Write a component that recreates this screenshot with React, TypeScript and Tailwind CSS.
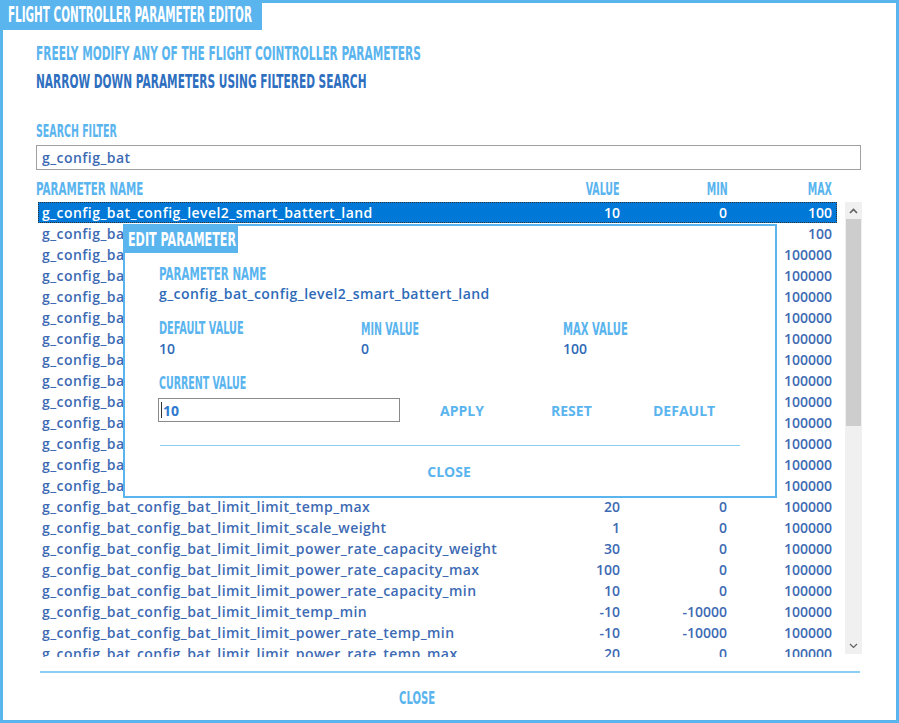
import React from "react";

function Cond({
  children,
  className = "",
  origin = "origin-left",
  scale = "scale-x-[0.62]",
}: {
  children: React.ReactNode;
  className?: string;
  origin?: string;
  scale?: string;
}) {
  return (
    <span
      className={`inline-block whitespace-nowrap font-bold ${scale} ${origin} ${className}`}
      style={{ fontFamily: '"DejaVu Sans Condensed", "DejaVu Sans", sans-serif' }}
    >
      {children}
    </span>
  );
}

type Row = { name: string; value: string; min: string; max: string };

const rows: Row[] = [
  { name: "g_config_bat_config_level2_smart_battert_land", value: "10", min: "0", max: "100" },
  { name: "g_config_bat_config_level1_smart_battert_go_home", value: "15", min: "0", max: "100" },
  { name: "g_config_bat_config_bat_limit_limit_voltage_max", value: "4350", min: "0", max: "100000" },
  { name: "g_config_bat_config_bat_limit_limit_voltage_min", value: "3000", min: "0", max: "100000" },
  { name: "g_config_bat_config_bat_limit_limit_current_max", value: "200", min: "0", max: "100000" },
  { name: "g_config_bat_config_bat_limit_limit_current_min", value: "0", min: "0", max: "100000" },
  { name: "g_config_bat_config_bat_limit_limit_power_max", value: "500", min: "0", max: "100000" },
  { name: "g_config_bat_config_bat_limit_limit_power_min", value: "0", min: "0", max: "100000" },
  { name: "g_config_bat_config_bat_limit_limit_capacity_max", value: "100", min: "0", max: "100000" },
  { name: "g_config_bat_config_bat_limit_limit_capacity_min", value: "10", min: "0", max: "100000" },
  { name: "g_config_bat_config_bat_limit_limit_power_rate_max", value: "100", min: "0", max: "100000" },
  { name: "g_config_bat_config_bat_limit_limit_power_rate_min", value: "10", min: "0", max: "100000" },
  { name: "g_config_bat_config_bat_limit_limit_temp_weight", value: "30", min: "0", max: "100000" },
  { name: "g_config_bat_config_bat_limit_limit_scale_max", value: "100", min: "0", max: "100000" },
  { name: "g_config_bat_config_bat_limit_limit_temp_max", value: "20", min: "0", max: "100000" },
  { name: "g_config_bat_config_bat_limit_limit_scale_weight", value: "1", min: "0", max: "100000" },
  { name: "g_config_bat_config_bat_limit_limit_power_rate_capacity_weight", value: "30", min: "0", max: "100000" },
  { name: "g_config_bat_config_bat_limit_limit_power_rate_capacity_max", value: "100", min: "0", max: "100000" },
  { name: "g_config_bat_config_bat_limit_limit_power_rate_capacity_min", value: "10", min: "0", max: "100000" },
  { name: "g_config_bat_config_bat_limit_limit_temp_min", value: "-10", min: "-10000", max: "100000" },
  { name: "g_config_bat_config_bat_limit_limit_power_rate_temp_min", value: "-10", min: "-10000", max: "100000" },
  { name: "g_config_bat_config_bat_limit_limit_power_rate_temp_max", value: "20", min: "0", max: "100000" },
];

const bodyFont = { fontFamily: '"Open Sans", "DejaVu Sans", sans-serif' };

export default function App() {
  return (
    <div
      className="relative w-[899px] h-[723px] border-[3px] border-[#5ab4ee] bg-white flex flex-col overflow-hidden"
      style={bodyFont}
    >
      {/* Title tab */}
      <div className="self-start -mt-[3px] -ml-[3px] h-[30px] w-[262px] bg-[#5ab4ee] flex items-center pl-[8px]">
        <Cond scale="scale-x-[0.55]" className="text-white text-[21px] leading-none">
          FLIGHT CONTROLLER PARAMETER EDITOR
        </Cond>
      </div>

      <div className="pl-[33px] pt-[9px] flex flex-col">
        <div className="h-[28px] flex items-center">
          <Cond className="text-[#5ab4ee] text-[19px] leading-none">
            FREELY MODIFY ANY OF THE FLIGHT COINTROLLER PARAMETERS
          </Cond>
        </div>
        <div className="h-[28px] flex items-center">
          <Cond className="text-[#2f6fbf] text-[19px] leading-none">
            NARROW DOWN PARAMETERS USING FILTERED SEARCH
          </Cond>
        </div>
        <div className="h-[22px] mt-[25px] flex items-center">
          <Cond className="text-[#5ab4ee] text-[17px] leading-none">SEARCH FILTER</Cond>
        </div>
        <div className="mt-[3px] w-[825px] h-[25px] border border-[#a0a0a0] flex items-center pl-[5px] text-[14px] tracking-[0.45px] font-semibold text-[#3d6ab3]">
          g_config_bat
        </div>
        {/* header */}
        <div className="flex items-center h-[22px] mt-[8px] w-[799px]">
          <div className="w-[482px]">
            <Cond className="text-[#5ab4ee] text-[18.5px] leading-none">PARAMETER NAME</Cond>
          </div>
          <div className="w-[102px] text-right">
            <Cond origin="origin-right" className="text-[#5ab4ee] text-[17px] leading-none">VALUE</Cond>
          </div>
          <div className="w-[108px] text-right">
            <Cond origin="origin-right" className="text-[#5ab4ee] text-[17px] leading-none">MIN</Cond>
          </div>
          <div className="w-[104px] text-right">
            <Cond origin="origin-right" className="text-[#5ab4ee] text-[17px] leading-none">MAX</Cond>
          </div>
        </div>
      </div>

      {/* list */}
      <div className="flex ml-[35px] mt-[2px] h-[455px]">
        <div className="w-[799px] h-[455px] overflow-hidden">
          {rows.map((r, i) => {
            const sel = i === 0;
            return (
              <div
                key={i}
                className={`flex items-center h-[21px] pl-[4px] text-[14px] font-semibold whitespace-nowrap ${
                  sel ? "bg-[#0078d7] text-white outline-1 outline-dotted outline-[#333] -outline-offset-1" : "text-[#3d6ab3]"
                }`}
              >
                <div className="w-[478px] overflow-hidden tracking-[0.45px]">{r.name}</div>
                <div className="w-[100px] text-right">{r.value}</div>
                <div className="w-[107px] text-right">{r.min}</div>
                <div className="w-[105px] text-right">{r.max}</div>
              </div>
            );
          })}
        </div>
        {/* scrollbar */}
        <div className="ml-[8px] w-[17px] h-[452px] bg-[#f0f0f0] flex flex-col">
          <div className="h-[17px] flex items-center justify-center">
            <svg width="9" height="6" viewBox="0 0 9 6">
              <path d="M1 5 L4.5 1.5 L8 5" fill="none" stroke="#606060" strokeWidth="1.6" />
            </svg>
          </div>
          <div className="mx-[1px] h-[207px] bg-[#cdcdcd]" />
          <div className="flex-1" />
          <div className="h-[17px] flex items-center justify-center">
            <svg width="9" height="6" viewBox="0 0 9 6">
              <path d="M1 1 L4.5 4.5 L8 1" fill="none" stroke="#606060" strokeWidth="1.2" />
            </svg>
          </div>
        </div>
      </div>

      <div className="ml-[37px] mt-[14px] w-[820px] h-[2px] bg-[#8ccdf4]" />
      <div className="flex justify-center pr-[64px] mt-[16px]">
        <Cond origin="origin-center" className="text-[#5ab4ee] text-[18px] leading-none">CLOSE</Cond>
      </div>

      {/* Edit parameter modal */}
      <div className="absolute left-[120px] top-[221px] w-[654px] h-[274px] bg-white border-2 border-[#5ab4ee] flex flex-col">
        <div className="self-start -mt-[1px] -ml-[2px] h-[28px] w-[115px] bg-[#5ab4ee] flex items-center pl-[5px]">
          <Cond className="text-white text-[20px] leading-none">EDIT PARAMETER</Cond>
        </div>
        <div className="pl-[34px] pt-[11px] flex flex-col">
          <div className="h-[20px] flex items-center">
            <Cond className="text-[#5ab4ee] text-[18.5px] leading-none">PARAMETER NAME</Cond>
          </div>
          <div className="h-[20px] -mt-[1px] flex items-center text-[14px] tracking-[0.45px] font-semibold text-[#2e6ab8]">
            g_config_bat_config_level2_smart_battert_land
          </div>
          <div className="flex mt-[16px]">
            {[
              ["DEFAULT VALUE", "10", "text-[17.5px]"],
              ["MIN VALUE", "0", "text-[17px]"],
              ["MAX VALUE", "100", "text-[18px]"],
            ].map(([l, v, s]) => (
              <div key={l} className="w-[202px] flex flex-col">
                <div className="h-[20px] flex items-center">
                  <Cond className={`text-[#5ab4ee] leading-none ${s}`}>{l}</Cond>
                </div>
                <div className="h-[20px] -mt-[1px] flex items-center text-[14px] font-semibold text-[#2e6ab8]">{v}</div>
              </div>
            ))}
          </div>
          <div className="h-[20px] mt-[15px] flex items-center">
            <Cond className="text-[#5ab4ee] text-[17px] leading-none">CURRENT VALUE</Cond>
          </div>
          <div className="flex items-center mt-[5px]">
            <div className="-ml-[1px] w-[242px] h-[24px] border border-[#8a8a8a] flex items-center pl-[2px] text-[14px] font-bold text-[#2e79d0]">
              <span className="w-px h-[16px] bg-[#333] mr-px" />
              10
            </div>
            <div className="ml-[40px] w-[111px] text-[14px] font-bold text-[#5ab4ee]">APPLY</div>
            <div className="w-[102px] text-[14px] font-bold text-[#5ab4ee]">RESET</div>
            <div className="text-[14px] font-bold text-[#5ab4ee]">DEFAULT</div>
          </div>
          <div className="mt-[23px] ml-[1px] w-[580px] h-px bg-[#8ccdf4]" />
          <div className="mt-[15px] w-[580px] flex justify-center">
            <span className="text-[14px] font-bold text-[#5ab4ee]">CLOSE</span>
          </div>
        </div>
      </div>
    </div>
  );
}
